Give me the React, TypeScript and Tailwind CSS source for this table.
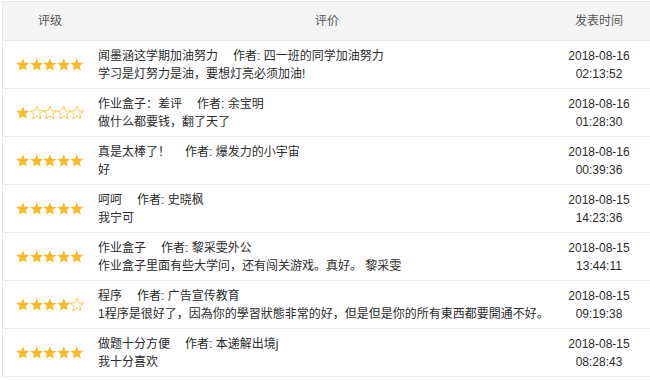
import React from 'react';

const reviews = [
  { rate: 5, title: '闻墨涵这学期加油努力', author: '四一班的同学加油努力', content: '学习是灯努力是油，要想灯亮必须加油!', date: '2018-08-16', time: '02:13:52' },
  { rate: 1, title: '作业盒子：差评', author: '余宝明', content: '做什么都要钱，翻了天了', date: '2018-08-16', time: '01:28:30' },
  { rate: 5, title: '真是太棒了！', author: '爆发力的小宇宙', content: '好', date: '2018-08-16', time: '00:39:36' },
  { rate: 5, title: '呵呵', author: '史晓枫', content: '我宁可', date: '2018-08-15', time: '14:23:36' },
  { rate: 5, title: '作业盒子', author: '黎采雯外公', content: '作业盒子里面有些大学问，还有闯关游戏。真好。 黎采雯', date: '2018-08-15', time: '13:44:11' },
  { rate: 4, title: '程序', author: '广告宣传教育', content: '1程序是很好了，因為你的學習狀態非常的好，但是但是你的所有東西都要開通不好。', date: '2018-08-15', time: '09:19:38' },
  { rate: 5, title: '做题十分方便', author: '本递解出境j', content: '我十分喜欢', date: '2018-08-15', time: '08:28:43' },
];

const STAR = 'M12 2.2l2.9 6.6 7.1.6-5.4 4.7 1.6 7-6.2-3.7-6.2 3.7 1.6-7L2 9.4l7.1-.6z';

function Stars({ value }: { value: number }) {
  return (
    <div className="flex items-center justify-center">
      {[1, 2, 3, 4, 5].map((i) => (
        <svg key={i} viewBox="1.5 1.6 21 21" className="w-[13.6px] h-[13.6px]">
          {i <= value ? (
            <path d={STAR} fill="#f7ba2a" />
          ) : (
            <path d={STAR} fill="none" stroke="#f7ba2a" strokeWidth="1.3" strokeLinejoin="round" />
          )}
        </svg>
      ))}
    </div>
  );
}

export default function App() {
  return (
    <div
      className="w-[650px] h-[380px] bg-white overflow-hidden pl-[2px] pt-[1px]"
      style={{ fontFamily: '"Liberation Sans", "Noto Sans CJK SC", sans-serif' }}
    >
      <div className="w-[660px] border-l border-t border-[#e6e6e6] text-[12px] text-[#2b2b2b]">
        <div className="flex h-[39px] items-center bg-[#f5f5f5] border-b border-[#ebebeb] text-[#555]">
          <div className="w-[94px] text-center">评级</div>
          <div className="flex-1 text-center">评价</div>
          <div className="w-[84px] text-center mr-[21px]">发表时间</div>
        </div>
        {reviews.map((r, idx) => (
          <div key={idx} className="flex h-[48px] items-center border-b border-[#eeeeee] leading-[18px]">
            <div className="w-[94px]">
              <Stars value={r.rate} />
            </div>
            <div className="flex-1 pl-[1px]">
              <div>
                {r.title}
                <span className="ml-[15px]">作者: {r.author}</span>
              </div>
              <div>{r.content}</div>
            </div>
            <div className="w-[84px] text-center mr-[21px]">
              <div>{r.date}</div>
              <div>{r.time}</div>
            </div>
          </div>
        ))}
      </div>
    </div>
  );
}
